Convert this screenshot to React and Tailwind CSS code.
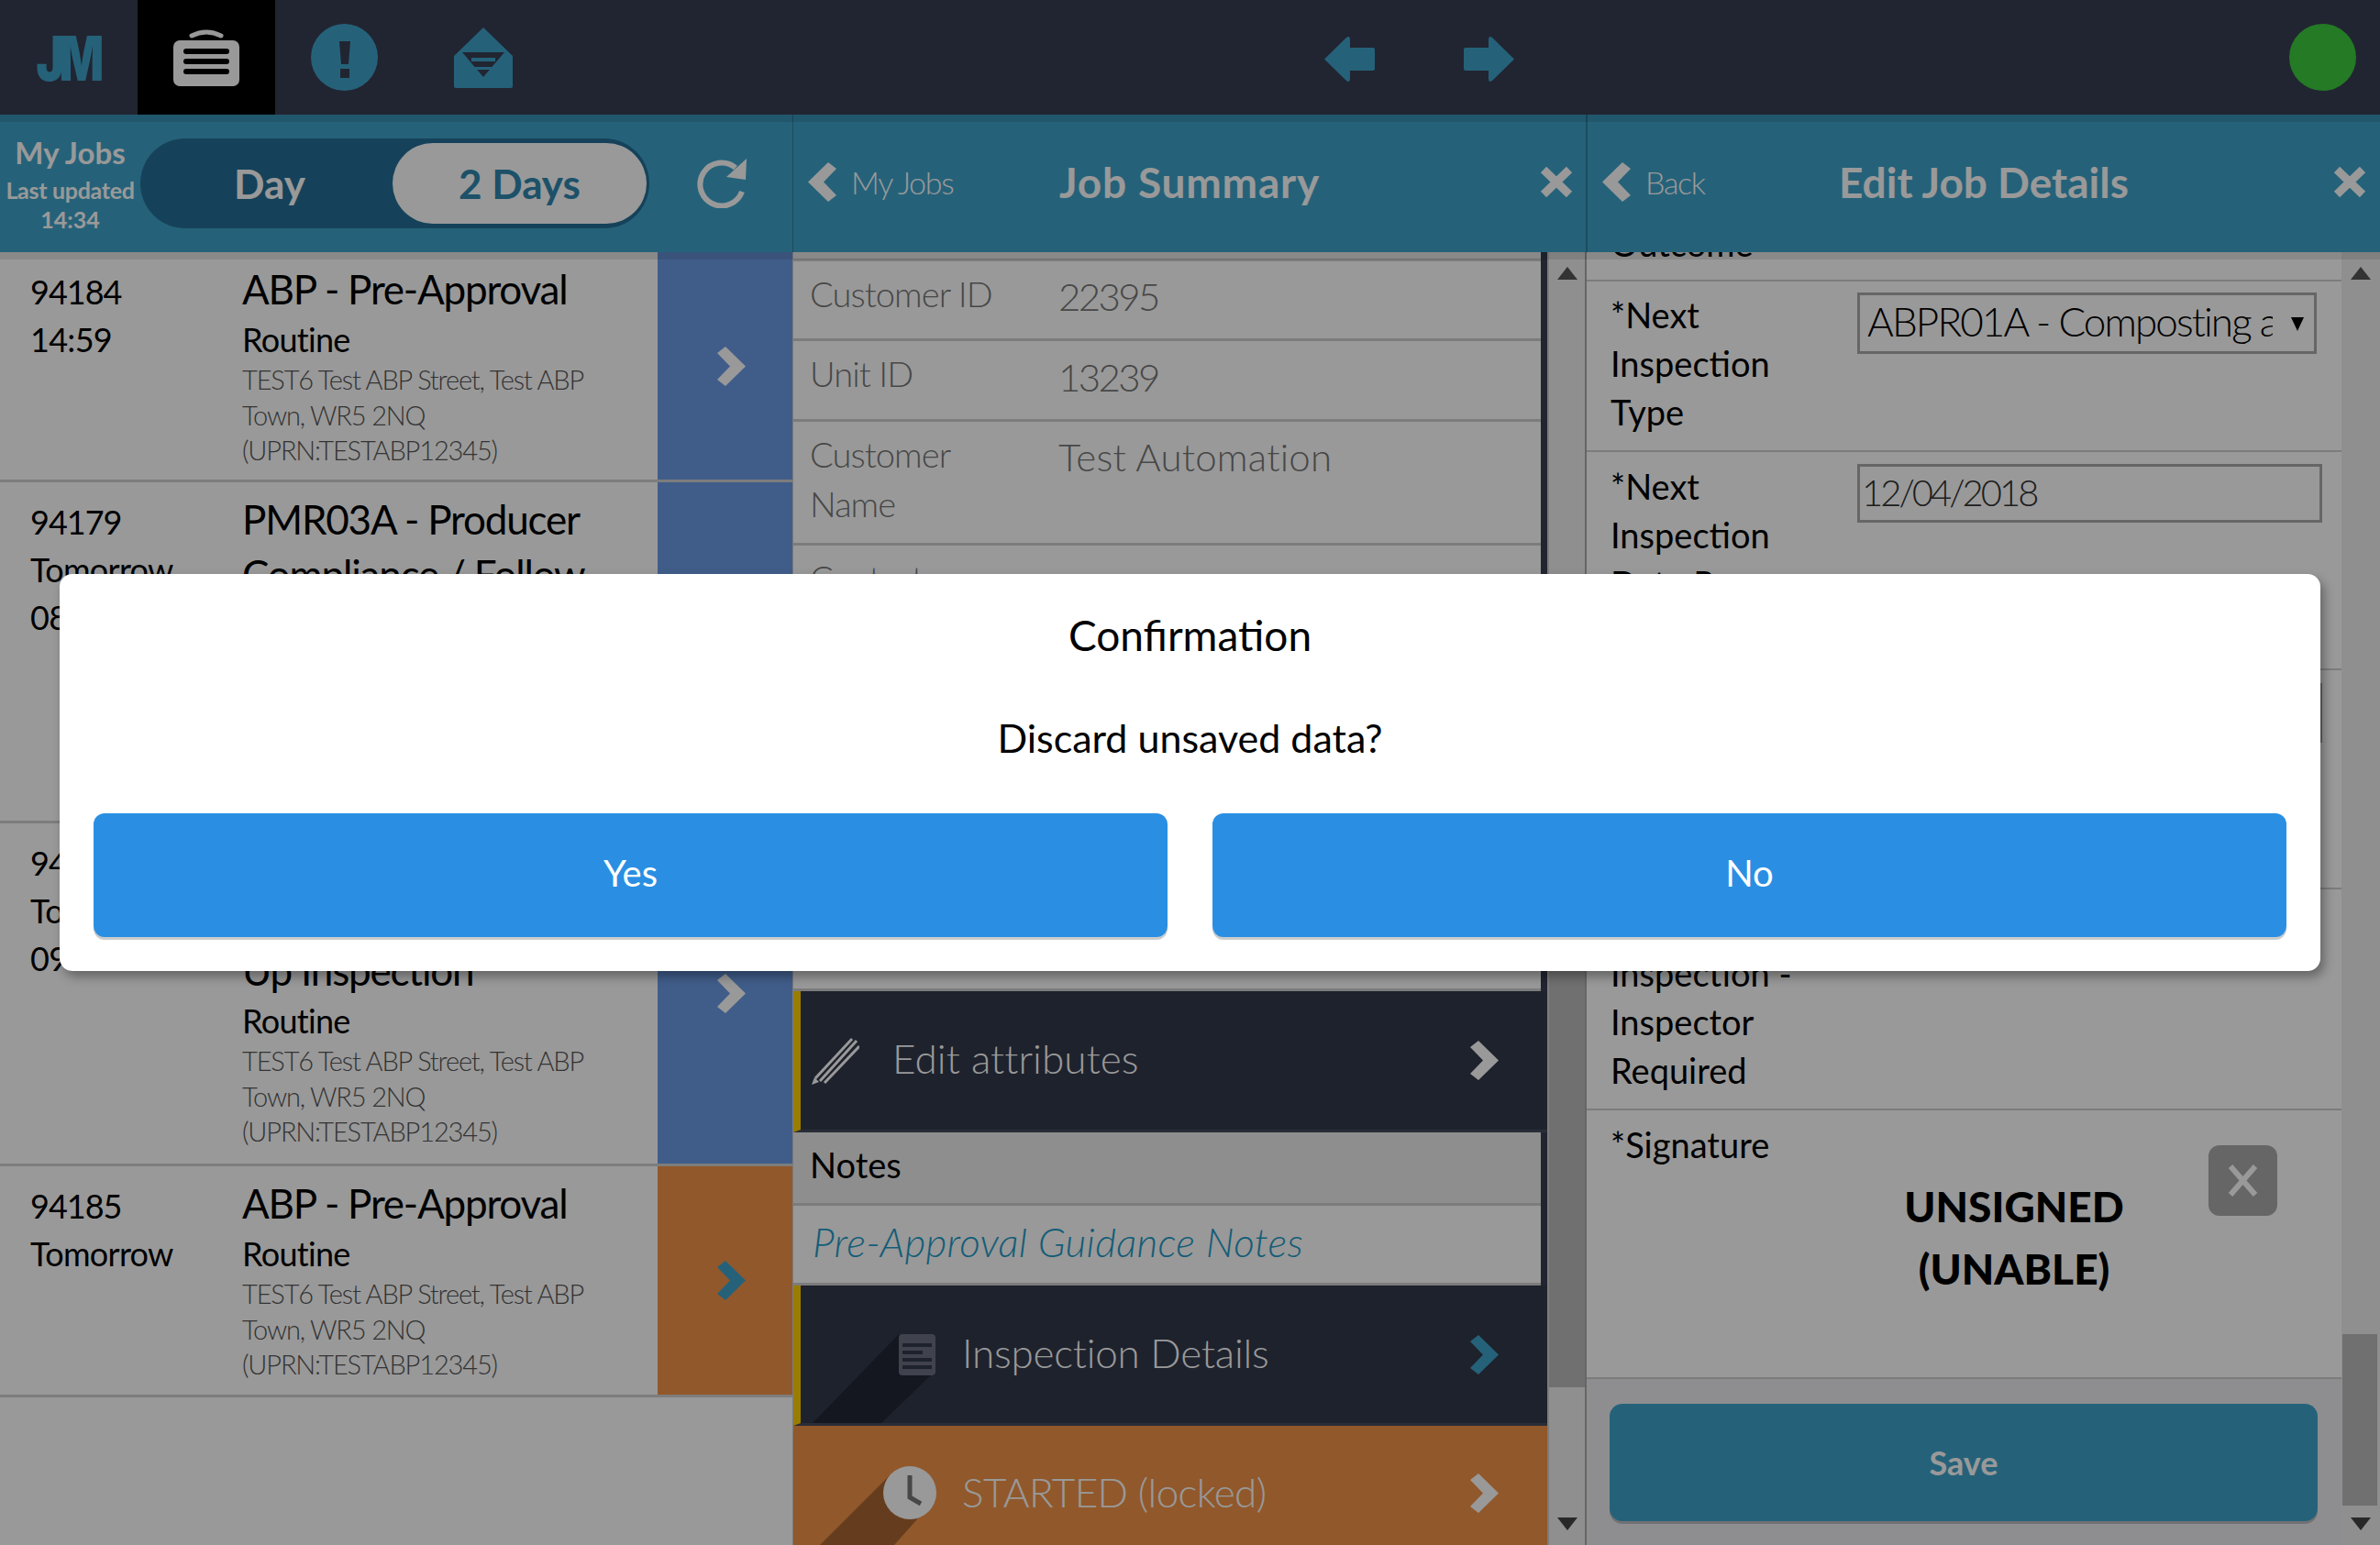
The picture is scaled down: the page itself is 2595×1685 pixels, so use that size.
const Chevron = ({ dir = "right", color = "#fff", className = "" }) => (
  <svg viewBox="0 0 31 43" className={`w-[31px] h-[43px] shrink-0 ${className}`}>
    <polygon
      fill={color}
      points={dir === "right" ? "0,7 9,0 31,21.5 9,43 0,36 14,21.5" : "31,7 22,0 0,21.5 22,43 31,36 17,21.5"}
    />
  </svg>
);

const CloseX = ({ className = "" }) => (
  <svg viewBox="0 0 36 33" className={`w-[36px] h-[33px] ${className}`}>
    <path d="M4 3 L32 30 M32 3 L4 30" stroke="#fff" strokeWidth="9" />
  </svg>
);

const Arrow = ({ flip }) => (
  <svg viewBox="0 0 57 51" className={`w-[57px] h-[51px] ${flip ? "-scale-x-100" : ""}`}>
    <path d="M1 25.5 L25 2 Q29 -1 29 5 V13 H54 Q56 13 56 15 V36 Q56 38 54 38 H29 V46 Q29 52 25 49 Z" fill="#3ea3cb" />
  </svg>
);

const Triangle = ({ down }) => (
  <svg viewBox="0 0 22 14" className="relative z-10 w-[22px] h-[14px]">
    <polygon points={down ? "0,0 22,0 11,14" : "0,14 22,14 11,0"} fill={down ? "#444" : "#555"} />
  </svg>
);

const Scrollbar = ({ thumbTop, thumbHeight, thumbClass = "", className = "" }) => (
  <div className={`relative flex flex-col items-center justify-between shrink-0 bg-[#eeeeee] pt-[16px] pb-[16px] ${className}`}>
    <Triangle />
    <Triangle down />
    <div className={`absolute top-0 left-0 right-0 bg-[#bbbbbb] ${thumbClass} ${thumbTop} ${thumbHeight}`} />
  </div>
);

const JobRow = ({ id, when, title, strip, chevron = "#fff", h }) => (
  <div className={`flex border-b-[3px] border-[#d0d0d0] ${h}`}>
    <div className="w-[264px] pl-[33px] pt-[17px] text-[36px] leading-[52px] font-normal text-black shrink-0">
      <div className="tracking-[-1px]">{id}</div>
      {when.map((w) => (
        <div key={w} className="tracking-[-0.7px]">{w}</div>
      ))}
    </div>
    <div className="flex-1 pt-[10px] min-w-0">
      <div className="text-[44px] leading-[60px] tracking-[-1.2px] text-black">
        {title.map((t) => (
          <div key={t}>{t}</div>
        ))}
      </div>
      <div className="text-[36px] leading-[52px] -mt-[1px] tracking-[-0.7px] text-black">Routine</div>
      <div className="text-[29px] leading-[38.6px] -mt-[1px] tracking-[-1.15px] font-light text-[#555555]">
        <div>TEST6 Test ABP Street, Test ABP</div>
        <div>Town, WR5 2NQ</div>
        <div>(UPRN:TESTABP12345)</div>
      </div>
    </div>
    <div className={`w-[147px] shrink-0 flex items-center pl-[65px] ${strip}`}>
      <Chevron color={chevron} />
    </div>
  </div>
);

const InfoRow = ({ label, value, h, valueClass = "" }) => (
  <div className={`flex border-b-[3px] border-[#cfcfcf] pl-[18px] ${h}`}>
    <div className="w-[271px] pt-[8px] text-[38px] leading-[54px] tracking-[-0.9px] font-light text-[#777777] shrink-0">
      {label.map((l) => (
        <div key={l}>{l}</div>
      ))}
    </div>
    <div className={`pt-[11px] text-[42px] leading-[54px] font-light text-[#777777] ${valueClass}`}>{value}</div>
  </div>
);

const FormRow = ({ lines, h, children, pt = "pt-[11px]" }) => (
  <div className={`flex border-b-[2px] border-[#cfcfcf] pl-[26px] ${pt} ${h}`}>
    <div className="w-[269px] shrink-0 text-[38px] leading-[53px] text-black">
      {lines.map((l) => (
        <div key={l}>{l}</div>
      ))}
    </div>
    {children}
  </div>
);

const HeaderTitle = ({ back, title, titleClass, backWidth, border, closeClass }) => (
  <div className={`flex-1 flex items-center pb-[4px] text-white ${border}`}>
    <div className={`flex items-center shrink-0 pl-[16px] ${backWidth}`}>
      <Chevron dir="left" />
      <span className="ml-[16px] text-[34px] tracking-[-1.3px] font-light">{back}</span>
    </div>
    <span className={`text-[46px] font-bold ${titleClass}`}>{title}</span>
    <CloseX className={`ml-auto ${closeClass}`} />
  </div>
);

export default function App() {
  return (
    <div className="relative w-[2595px] h-[1685px] overflow-hidden bg-white font-['Lato',sans-serif] flex flex-col">
      {/* top bar */}
      <div className="relative z-20 h-[125px] shrink-0 flex items-center bg-[#373e53] shadow-[0_8px_0_rgba(0,0,0,0.1)] pr-[26px]">
        <div className="w-[150px] h-full flex items-center justify-center pr-[2px]">
          <span className="inline-block scale-x-75 font-['Inter',sans-serif] text-[68px] leading-none font-black tracking-[-7px] text-[#3ea3cb]">JM</span>
        </div>
        <div className="w-[150px] h-full bg-black flex items-center justify-center">
          <svg viewBox="0 0 72 63" className="w-[72px] h-[63px]">
            <path d="M20 8 Q36 0 52 8" stroke="#fff" strokeWidth="5" fill="none" strokeLinecap="round" />
            <rect x="0" y="13" width="72" height="50" rx="7" fill="#fff" />
            <rect x="11" y="22" width="50" height="6" rx="3" fill="#000" />
            <rect x="11" y="33" width="50" height="6" rx="3" fill="#000" />
            <rect x="11" y="44" width="50" height="6" rx="3" fill="#000" />
          </svg>
        </div>
        <div className="w-[150px] h-full flex items-center justify-center">
          <svg viewBox="0 0 73 73" className="w-[73px] h-[73px]">
            <circle cx="36.5" cy="36.5" r="36.5" fill="#3ea3cb" />
            <polygon points="31,19 43,19 41,44 33,44" fill="#373e53" />
            <rect x="32" y="49" width="10" height="10" fill="#373e53" />
          </svg>
        </div>
        <div className="w-[150px] h-full flex items-center justify-center pl-[3px]">
          <svg viewBox="0 0 64 66" className="w-[64px] h-[66px]">
            <path d="M32 0 L64 31 V64 Q64 66 62 66 H2 Q0 66 0 64 V31 Z" fill="#3ea3cb" />
            <polygon points="9,27 55,27 32,54" fill="#373e53" />
            <rect x="19" y="33" width="26" height="4" fill="#3ea3cb" />
            <rect x="10" y="43" width="44" height="3" fill="#3ea3cb" />
          </svg>
        </div>
        <div className="ml-[843px] mt-[3px] flex items-center gap-[95px]">
          <Arrow />
          <Arrow flip />
        </div>
        <div className="ml-auto w-[73px] h-[73px] rounded-full bg-[#3ecb3e]" />
      </div>

      {/* sub headers */}
      <div className="relative z-10 h-[150px] shrink-0 flex bg-[#3ea3cb] shadow-[0_8px_0_rgba(0,0,0,0.1)]">
        <div className="w-[864px] shrink-0 flex items-center">
          <div className="w-[153px] shrink-0 mb-[4px] text-center text-white font-bold leading-none">
            <div className="text-[33px] leading-[49px]">My Jobs</div>
            <div className="text-[25px] leading-[32px] tracking-[-0.3px]">Last updated</div>
            <div className="text-[25px] leading-[32px]">14:34</div>
          </div>
          <div className="w-[555px] h-[98px] rounded-full bg-[#236e96] flex items-center px-[3px]">
            <div className="flex-1 text-center text-[44px] font-bold text-white pl-[4px]">Day</div>
            <div className="w-[277px] h-[88px] rounded-full bg-white flex items-center justify-center text-[44px] font-bold text-[#2f88b0]">
              2 Days
            </div>
          </div>
          <svg viewBox="0 0 56 54" className="ml-[51px] w-[56px] h-[54px]">
            <path d="M43 10 A23.5 23.5 0 1 0 50 36" stroke="#fff" strokeWidth="6" fill="none" />
            <polygon points="55,0 54,23 33,20" fill="#fff" />
          </svg>
        </div>
        <HeaderTitle
          back="My Jobs"
          title="Job Summary"
          backWidth="w-[290px]"
          titleClass="tracking-[0.8px]"
          border="border-l border-[#2f7d9c]"
          closeClass="mr-[14px]"
        />
        <HeaderTitle
          back="Back"
          title="Edit Job Details"
          backWidth="w-[274px]"
          titleClass=""
          border="border-l-2 border-[#2f7d9c]"
          closeClass="mr-[15px]"
        />
      </div>

      {/* panels */}
      <div className="flex-1 flex min-h-0">
        {/* list */}
        <div className="w-[864px] shrink-0 overflow-hidden">
          <JobRow h="h-[251px]" id="94184" when={["14:59"]} title={["ABP - Pre-Approval"]} strip="bg-[#6c9be6]" />
          <JobRow
            h="h-[372px]"
            id="94179"
            when={["Tomorrow", "08:00"]}
            title={["PMR03A - Producer", "Compliance / Follow", "Up Inspection"]}
            strip="bg-[#6c9be6]"
          />
          <JobRow
            h="h-[374px]"
            id="94180"
            when={["Tomorrow", "09:00"]}
            title={["PMR03A - Producer", "Compliance / Follow", "Up Inspection"]}
            strip="bg-[#6c9be6]"
          />
          <JobRow h="h-[252px]" id="94185" when={["Tomorrow"]} title={["ABP - Pre-Approval"]} strip="bg-[#f29348]" chevron="#3ea3cb" />
        </div>

        {/* job summary */}
        <div className="w-[864px] shrink-0 flex border-l border-[#cfcfcf]">
          <div className="w-[822px] shrink-0 bg-[#373e53] overflow-hidden flex flex-col">
            <div className="w-[815px]">
              <div className="h-[10px] border-b-[3px] border-[#cfcfcf] bg-white" />
              <div className="bg-white">
                <InfoRow h="h-[87px]" label={["Customer ID"]} value="22395" valueClass="tracking-[-2.6px]" />
                <InfoRow h="h-[88px]" label={["Unit ID"]} value="13239" valueClass="mt-[1px] tracking-[-2.6px]" />
                <InfoRow h="h-[135px]" label={["Customer", "Name"]} value="Test Automation" valueClass="tracking-[0.2px]" />
                <InfoRow h="h-[486px]" label={["Contact"]} value="" />
              </div>
            </div>
            <div className="h-[154px] shrink-0 flex items-center bg-[#32394b] border-l-[8px] border-[#ffd000] border-b-[3px] border-b-[#454b5c]">
              <svg viewBox="0 0 52 52" className="ml-[12px] w-[52px] h-[52px]">
                <path d="M4 45 L44 2 M9 48 L49 4 M14 50 L52 10" stroke="#fff" strokeWidth="3" />
                <polygon points="0,52 3,44 8,49" fill="#fff" />
              </svg>
              <span className="ml-[36px] mb-[6px] text-[44px] font-light tracking-[0.1px] text-white">Edit attributes</span>
              <Chevron className="ml-auto mr-[53px]" />
            </div>
            <div className="w-[815px]">
              <div className="h-[80px] flex items-center pl-[18px] pb-[6px] bg-[#ededed] border-b-[3px] border-[#cfcfcf] text-[38px] text-black">
                Notes
              </div>
              <div className="h-[87px] flex items-center pl-[21px] pb-[6px] bg-white border-b-[3px] border-[#cfcfcf] text-[44px] tracking-[0.3px] italic font-light text-[#1f9cc8]">
                Pre-Approval Guidance Notes
              </div>
            </div>
            <div className="relative h-[153px] shrink-0 flex items-center bg-[#32394b] border-l-[8px] border-[#ffd000] border-b-[3px] border-b-[#454b5c]">
              <svg viewBox="0 0 160 150" className="absolute left-0 top-0 w-[160px] h-[150px]">
                <polygon points="107,53 13,150 88,150 146,94" fill="#000" fillOpacity="0.3" />
              </svg>
              <svg viewBox="0 0 40 45" className="relative ml-[107px] w-[40px] h-[45px]">
                <rect width="40" height="45" rx="4" fill="#6b7080" />
                <rect x="4" y="10" width="32" height="4" fill="#32394b" />
                <rect x="4" y="18" width="22" height="4" fill="#32394b" />
                <rect x="4" y="26" width="32" height="4" fill="#32394b" />
                <rect x="4" y="34" width="32" height="4" fill="#32394b" />
              </svg>
              <span className="relative ml-[29px] mb-[4px] text-[44px] font-light tracking-[-0.2px] text-white">Inspection Details</span>
              <Chevron color="#3ea3cb" className="ml-auto mr-[53px]" />
            </div>
            <div className="relative flex-1 flex items-center pt-[16px] bg-[#f29348]">
              <svg viewBox="0 0 140 130" className="absolute left-0 top-0 w-[140px] h-[130px]">
                <polygon points="104,55 29,130 110,130 135,102" fill="#000" fillOpacity="0.3" />
              </svg>
              <svg viewBox="0 0 58 58" className="relative ml-[98px] w-[58px] h-[58px]">
                <circle cx="29" cy="29" r="29" fill="#fff" />
                <path d="M29 10 V34 L41 41" stroke="#777" strokeWidth="5" fill="none" />
              </svg>
              <span className="relative ml-[28px] mb-[3px] text-[44px] font-light tracking-[-0.6px] text-white">STARTED (locked)</span>
              <Chevron className="ml-auto mr-[53px]" />
            </div>
          </div>
          <Scrollbar className="flex-1 border-l-2 border-[#cfcfcf]" thumbTop="top-[400px]" thumbHeight="h-[838px]" />
        </div>

        {/* edit job details */}
        <div className="flex-1 flex min-w-0 border-l-2 border-[#aaaaaa]">
          <div className="w-[823px] shrink-0 flex flex-col bg-[#ededf0] overflow-hidden">
            <div className="bg-white">
              <div className="h-[32px] overflow-hidden border-b-[2px] border-[#cfcfcf] pl-[26px]">
                <div className="-mt-[36px] text-[38px] leading-[53px] text-black">Outcome</div>
              </div>
              <FormRow h="h-[186px]" pt="pt-[10px]" lines={["*Next", "Inspection", "Type"]}>
                <div className="mt-[2px] w-[501px] h-[67px] border-[3px] border-[#aaaaaa] flex items-center pl-[8px] pb-[6px] relative">
                  <span className="w-[442px] overflow-hidden whitespace-nowrap text-[44px] tracking-[-1.9px] font-light text-black">
                    ABPR01A - Composting and Biogas
                  </span>
                  <svg viewBox="0 0 14 15" className="absolute right-[11px] top-[24px] w-[14px] h-[15px]">
                    <polygon points="0,0 14,0 7,15" fill="#000" />
                  </svg>
                </div>
              </FormRow>
              <FormRow h="h-[238px]" lines={["*Next", "Inspection", "Date Range"]}>
                <div className="mt-[2px] w-[507px] h-[64px] border-[3px] border-[#aaaaaa] flex items-center pl-[2px] pb-[3px] text-[40px] tracking-[-3px] font-light text-[#333333]">
                  12/04/2018
                </div>
              </FormRow>
              <FormRow h="h-[239px]" lines={["*Next", "Inspection", "Notes"]}>
                <div className="mt-[3px] w-[507px] h-[65px] border-[3px] border-[#aaaaaa]" />
              </FormRow>
              <FormRow h="h-[241px]" pt="pt-[12px]" lines={["*Next", "Inspection -", "Inspector", "Required"]} />
              <div className="flex h-[293px] border-b-[2px] border-[#cfcfcf] pl-[26px] pt-[11px]">
                <div className="w-[269px] shrink-0 text-[38px] leading-[53px] text-black">*Signature</div>
                <div className="w-[342px] pt-[60px] text-center text-[46px] leading-[68px] font-black text-black">
                  <div>UNSIGNED</div>
                  <div>(UNABLE)</div>
                </div>
                <div className="ml-[41px] mt-[27px] w-[75px] h-[77px] rounded-[12px] bg-[#aaaaaa] flex items-center justify-center">
                  <svg viewBox="0 0 33 37" className="w-[33px] h-[37px]">
                    <path d="M3 3 L30 34 M30 3 L3 34" stroke="#fff" strokeWidth="6" />
                  </svg>
                </div>
              </div>
            </div>
            <div className="flex-1 px-[25px] pt-[27px]">
              <div className="w-[772px] h-[128px] rounded-[14px] bg-[#3ea3cb] shadow-[0_3px_0_rgba(0,0,0,0.2)] flex items-center justify-center text-[36px] font-bold text-white">
                Save
              </div>
            </div>
          </div>
          <Scrollbar className="flex-1" thumbTop="top-[1180px]" thumbHeight="h-[187px]" thumbClass="ml-[1px] mr-[3px]" />
        </div>
      </div>

      {/* dimming layer */}
      <div className="absolute inset-0 z-30 bg-black/40" />

      {/* dialog */}
      <div className="absolute z-40 left-[65px] top-[626px] w-[2465px] h-[433px] rounded-[14px] bg-white shadow-[4px_6px_12px_rgba(0,0,0,0.35)] px-[37px] flex flex-col">
        <div className="h-[132px] flex items-center justify-center text-[46px] text-black">Confirmation</div>
        <div className="h-[129px] flex items-start justify-center pt-[15px] text-[43px] text-black">Discard unsaved data?</div>
        <div className="flex justify-between">
          <button className="w-[1171px] h-[135px] rounded-[12px] bg-[#2a8fe3] shadow-[0_3px_0_#cccccc] pb-[5px] text-[40px] text-white">Yes</button>
          <button className="w-[1171px] h-[135px] rounded-[12px] bg-[#2a8fe3] shadow-[0_3px_0_#cccccc] pb-[5px] text-[40px] text-white">No</button>
        </div>
      </div>
    </div>
  );
}
